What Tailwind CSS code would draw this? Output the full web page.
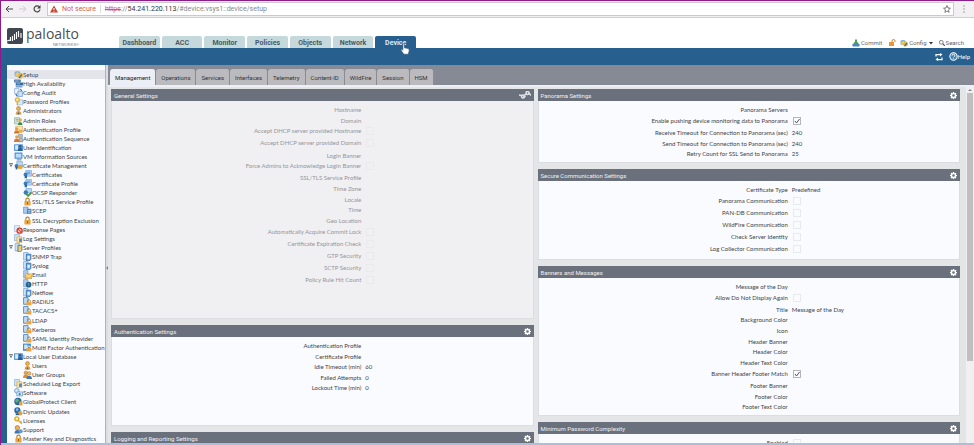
<!DOCTYPE html>
<html lang="en">
<head>
<meta charset="utf-8">
<title>Device setup</title>
<script src="https://cdn.jsdelivr.net/npm/@tailwindcss/browser@4"></script>
</head>
<body class="flex h-screen flex-col overflow-hidden border-t border-l border-[#8e1a8e] bg-white font-[Lato,sans-serif] text-[6px] leading-[9px] text-[#444]">

<svg class="hidden">
  <symbol id="gear" viewBox="0 0 16 16"><path fill="currentColor" fill-rule="evenodd" d="M6.600 0h2.800l.4 2.200 1.300.6L13 1.500 14.800 3.400 13.400 5.200l.6 1.400 2 .3v2.500l-2.100.5-.5 1.300 1.300 1.800-1.900 1.900-1.800-1.300-1.300.5L9.400 16H6.600l-.4-2-1.300-.5L3 14.900 1.100 13l1.300-1.800-.5-1.300L0 9.400V6.800l2-.4.5-1.300L1.200 3.300 3.100 1.400l1.800 1.300 1.300-.5zM8 5a3 3 0 1 0 0 6 3 3 0 0 0 0-6z"/></symbol>
  <symbol id="setup" viewBox="0 0 16 16"><rect x="1" y="2" width="10" height="10" rx="3" fill="#7fb0dc"/><path d="M2 9l4-6 3 3-3 6z" fill="#f3cf5c"/><circle cx="11" cy="10" r="5" fill="#f0b83f"/><path d="M9 14l5-6" stroke="#3d6fa8" stroke-width="2.500"/></symbol>
  <symbol id="ha" viewBox="0 0 16 16"><rect y="1" width="12" height="5" rx="1" fill="#4f7fb4"/><rect x="3" y="6" width="13" height="5" rx="1" fill="#356a9f"/><rect x="3" y="11" width="12" height="4" rx="1" fill="#7ba4cd"/><path d="M2 3.500h6M5 8.500h6" stroke="#cfe2f4"/></symbol>
  <symbol id="audit" viewBox="0 0 16 16"><path d="M1 1h8v9H1z" fill="#e7f1fb" stroke="#6b9bce"/><path d="M7 6h8v9H7z" fill="#cfe2f6" stroke="#4c83bd"/><path d="M3 11l3 4M11 2l3 3" stroke="#2f6fb0" stroke-width="2"/></symbol>
  <symbol id="key" viewBox="0 0 16 16"><circle cx="5" cy="5" r="3.500" fill="#fff3b8" stroke="#dca82c" stroke-width="2.500"/><path d="M8 8l6 6M11 11l3-1" stroke="#dca82c" stroke-width="2.500"/></symbol>
  <symbol id="pass" viewBox="0 0 16 16"><path d="M6 5h9v9H6z" fill="#dce9f7" stroke="#86add6"/><circle cx="6" cy="5" r="3.500" fill="#fff3b8" stroke="#e5b335" stroke-width="2.500"/><path d="M6 9v6" stroke="#e5b335" stroke-width="2.500"/></symbol>
  <symbol id="user" viewBox="0 0 16 16"><circle cx="8" cy="4.500" r="3.500" fill="#eeb153" stroke="#a86e22"/><path d="M3 15c0-4 2-6 5-6s5 2 5 6z" fill="#e59a2e"/><path d="M8 10l2 5H6z" fill="#3e74b5"/></symbol>
  <symbol id="roles" viewBox="0 0 16 16"><path d="M1 3h9v11H1z" fill="#dcebd9" stroke="#6c9c79"/><path d="M3 6h5M3 9h5" stroke="#507bb0"/><circle cx="11" cy="7" r="3" fill="#e8a848"/><path d="M7 16c0-4 2-5 4-5s4 1 4 5z" fill="#3d8a58"/></symbol>
  <symbol id="users" viewBox="0 0 16 16"><circle cx="5" cy="5" r="3" fill="#eeb153" stroke="#9a6220"/><path d="M0 14c0-4 2-6 5-6s5 2 5 6z" fill="#e38d29"/><circle cx="11" cy="6" r="3" fill="#f2c678" stroke="#9a6220"/><path d="M6 16c0-4 2-6 5-6s5 2 5 6z" fill="#4177b4"/></symbol>
  <symbol id="authp" viewBox="0 0 16 16"><path d="M3 2h12v9H3z" fill="#fce7c2" stroke="#dd9a3c"/><circle cx="5" cy="7" r="3" fill="#e8a03c"/><path d="M0 15c0-4 2-5 5-5s5 1 5 5z" fill="#d9772b"/><rect x="9" y="8" width="6" height="6" fill="#f1b13c"/></symbol>
  <symbol id="authq" viewBox="0 0 16 16"><path d="M8 1h7v5H8zM9 8h7v6H9z" fill="#b9bec8" stroke="#7c8290"/><circle cx="5" cy="5" r="3" fill="#e8a03c"/><path d="M0 14c0-4 2-6 5-6s5 2 5 6z" fill="#d9772b"/></symbol>
  <symbol id="ident" viewBox="0 0 16 16"><rect y="2" width="16" height="12" rx="1" fill="#5d98d4"/><path d="M2 4h5v8H2z" fill="#dceafa"/><circle cx="11" cy="6" r="2.500" fill="#2c5d96"/><path d="M7 14c0-4 2-5 4-5s4 1 4 5z" fill="#2c5d96"/></symbol>
  <symbol id="vm" viewBox="0 0 16 16"><rect x="1" y="1" width="14" height="11" rx="1" fill="#4b90d6"/><path d="M3 3h10v7H3z" fill="#b9dcfa"/><path d="M5 14h8" stroke="#6789ae" stroke-width="2"/></symbol>
  <symbol id="cert" viewBox="0 0 16 16"><path d="M5 1h10v10H5z" fill="#b8d7f4" stroke="#5e97d0"/><path d="M7 4h6M7 6.500h6" stroke="#3b78b8"/><circle cx="4.500" cy="8" r="3.500" fill="#397cbc"/><path d="M3 10h4v5l-2-1-2 1z" fill="#28629c"/></symbol>
  <symbol id="certm" viewBox="0 0 16 16"><path d="M5 1h10v10H5z" fill="#b8d7f4" stroke="#5e97d0"/><circle cx="4.500" cy="9" r="3.500" fill="#397cbc"/><path d="M7 7h8v7H7z" fill="#e6a53b"/><path d="M3 10h3v5H3z" fill="#28629c"/></symbol>
  <symbol id="ocsp" viewBox="0 0 16 16"><path d="M5 1h10v8H5z" fill="#b8d7f4" stroke="#5e97d0"/><circle cx="5" cy="8" r="4" fill="#397cbc"/><path d="M6 11l3 3 6-6" fill="none" stroke="#3d9348" stroke-width="3"/></symbol>
  <symbol id="lock" viewBox="0 0 16 16"><path d="M5 8V5a3 3 0 0 1 6 0v3" fill="none" stroke="#b88132" stroke-width="2"/><rect x="2.500" y="7" width="11" height="8" rx="1" fill="#e9a640"/><path d="M8 9v4" stroke="#8f5a16" stroke-width="1.500"/></symbol>
  <symbol id="scep" viewBox="0 0 16 16"><path d="M1 2h8v11H1z" fill="#a9cdf0" stroke="#3e7dbd"/><path d="M7 5h8v9H7z" fill="#4c87c4"/><path d="M9 8h4M9 11h4" stroke="#fff"/></symbol>
  <symbol id="resp" viewBox="0 0 16 16"><path d="M1 1h9v11H1z" fill="#e1ecf7" stroke="#8db0d4"/><circle cx="10" cy="10" r="4.500" fill="#fbd8d2" stroke="#d6402e" stroke-width="2.500"/><path d="M7 7l6 6" stroke="#d6402e" stroke-width="2"/></symbol>
  <symbol id="log" viewBox="0 0 16 16"><path d="M1 1h9v11H1z" fill="#d5e6f7" stroke="#6a9dcf"/><path d="M5 5h9v10H5z" fill="#fbe3a2" stroke="#caa03a"/><path d="M9 8h5v6H9z" fill="#4f8ac8"/></symbol>
  <symbol id="server" viewBox="0 0 16 16"><path d="M1 1h8v13H1z" fill="#cfe3f7" stroke="#5990c9"/><path d="M6 4h8v9l-3 3H6z" fill="#7eb2e4" stroke="#2e6eb0" stroke-width="1.500"/><path d="M8 7h4v5H8z" fill="#eaf4fd"/></symbol>
  <symbol id="serverg" viewBox="0 0 16 16"><path d="M2 1h8v13H2z" fill="#cfe3f7" stroke="#5990c9"/><path d="M7 4h7v9l-3 3H7z" fill="#f3cf62" stroke="#2e6eb0" stroke-width="1.500"/></symbol>
  <symbol id="mail" viewBox="0 0 16 16"><path d="M1 1h8v13H1z" fill="#a9cdf0" stroke="#5990c9"/><path d="M4 7h12v8H4z" fill="#f5c453" stroke="#bd8826"/><path d="M4 7l6 5 6-5" fill="none" stroke="#fff"/></symbol>
  <symbol id="http" viewBox="0 0 16 16"><path d="M1 1h8v13H1z" fill="#a9cdf0" stroke="#5990c9"/><circle cx="10" cy="10" r="5" fill="#23609d"/><path d="M8 7l4 1-2 5z" fill="#58a663"/></symbol>
  <symbol id="slock" viewBox="0 0 16 16"><path d="M1 1h8v12H1z" fill="#bddaf5" stroke="#4a83bf" stroke-width="1.500"/><path d="M8 10V7.500a2.500 2.500 0 0 1 5 0V10" fill="none" stroke="#a9762c" stroke-width="1.500"/><rect x="6" y="9" width="9" height="6" fill="#e9a640"/></symbol>
  <symbol id="mfa" viewBox="0 0 16 16"><path d="M0 1h14v13H0z" fill="#3f8ed6"/><path d="M2 3h6v8H2z" fill="#cbe4fa"/><path d="M8 10V8a2.500 2.500 0 0 1 5 0v2" fill="none" stroke="#fff" stroke-width="1.500"/><rect x="6" y="9" width="9" height="6" fill="#e9a640"/></symbol>
  <symbol id="globe" viewBox="0 0 16 16"><circle cx="7" cy="8" r="6.500" fill="#2a67a6"/><path d="M3 4l4-1 2 3-4 4-3-2z" fill="#62b067"/><path d="M9 8h6v7H9z" fill="#e4a138"/></symbol>
  <symbol id="dyn" viewBox="0 0 16 16"><circle cx="6" cy="6" r="5.500" fill="#2a67a6"/><path d="M3 3l4-1 1 3-3 3z" fill="#8fc6ef"/><circle cx="11" cy="11" r="4" fill="#e4a138"/><path d="M3 13h6" stroke="#2b5e92" stroke-width="3"/></symbol>
  <symbol id="soft" viewBox="0 0 16 16"><circle cx="5" cy="5" r="4" fill="#d5e7f8" stroke="#5d96cf" stroke-width="1.500"/><path d="M5 7h10v7H5z" fill="#e4eef8" stroke="#6f9fce" stroke-width="1.500"/><circle cx="10" cy="11" r="2" fill="#3e7cba"/></symbol>
  <symbol id="support" viewBox="0 0 16 16"><circle cx="6" cy="5" r="4" fill="#eeb153" stroke="#9a6220"/><path d="M1 15c0-4 2-6 5-6s5 2 5 6z" fill="#3e74b5"/><circle cx="12" cy="11" r="3.500" fill="#5c9ad8"/></symbol>
</svg>

<!-- Browser toolbar -->
<div class="flex h-[17px] shrink-0 items-center border-b border-[#d0ccd2] bg-[#f2f0f3]">
  <button aria-label="Back" class="ml-1 w-2"><svg viewBox="0 0 8 8" class="size-2"><path d="M4 1L1 4l3 3M1 4h7" fill="none" stroke="#444"/></svg></button>
  <button aria-label="Forward" class="ml-1.5 w-2"><svg viewBox="0 0 8 8" class="size-2"><path d="M4 1l3 3-3 3M0 4h7" fill="none" stroke="#ccc"/></svg></button>
  <button aria-label="Reload" class="ml-1.5 w-2"><svg viewBox="0 0 8 8" class="size-2"><path d="M6.600 2.300A3 3 0 1 0 7 4.500" fill="none" stroke="#444" stroke-width="1.200"/><path d="M7.500 0v3.500H4z" fill="#444"/></svg></button>
  <div class="ml-1.5 flex h-3.5 grow items-center border border-[#ccc8ce] bg-white pl-0.5 font-[Roboto,sans-serif] text-[7px]">
    <svg viewBox="0 0 8 8" class="mr-1 size-2"><path d="M4 .5L8 7.500H0z" fill="#c8432f"/><path d="M4 3v2M4 5.700v1" stroke="#fff"/></svg>
    <span class="text-[#d0604f]">Not secure</span>
    <span class="mx-1 h-2 w-px bg-[#ddd]"></span>
    <a href="#setup" class="text-[#888]"><span class="text-[#d0604f] line-through">https</span>://<span class="text-[#333]">54.241.220.113</span>/#device:vsys1::device/setup</a>
    <svg viewBox="0 0 16 16" class="mr-0.5 ml-auto size-2"><path d="M8 1l2 5 5 .4-4 3.400 1.300 5L8 12l-4.300 2.800L5 9.800 1 6.400 6 6z" fill="none" stroke="#555" stroke-width="1.500"/></svg>
  </div>
  <button aria-label="Menu" class="mx-1 flex w-3 justify-center"><svg viewBox="0 0 4 8" class="h-2 w-1"><path d="M1.500 1h1M1.500 4h1M1.500 7h1" stroke="#555"/></svg></button>
</div>

<!-- Brand and main navigation -->
<header class="flex h-[30px] shrink-0 items-end">
  <div class="flex w-[118px] items-start gap-[3px] pb-px pl-1.5">
    <svg viewBox="0 0 16 16" class="mt-0.5 size-4"><rect width="16" height="16" rx="2" fill="#414750"/><path d="M0 13l3-1M3.500 9v4M5.500 8v5M7.500 6v6M9.500 4v7M11.500 3v6M14 5v5" stroke="#fff" stroke-width="1.100"/></svg>
    <div class="flex flex-col items-end">
      <span class="font-['Open_Sans',sans-serif] text-[14px] leading-4 text-[#4a4f57]">paloalto</span>
      <span class="font-['Liberation_Sans',sans-serif] text-[4px] leading-[5px] text-[#777]">NETWORKS®</span>
    </div>
  </div>
  <nav id="main-tabs" class="flex h-3 w-[297px] gap-0.5 font-[Roboto,sans-serif] text-[7px] font-bold"></nav>
  <div class="mr-2.5 mb-px ml-auto flex items-center font-[Roboto,sans-serif] text-[#666]">
    <button class="flex items-center gap-px"><svg viewBox="0 0 16 16" class="size-2"><path d="M1 11l3-3h8l3 3v4H1z" fill="#4d86bd"/><path d="M8 11L3.500 6H6V1h4v5h2.500z" fill="#50a053"/></svg>Commit</button>
    <button aria-label="Locks" class="ml-1.5"><svg viewBox="0 0 16 16" class="size-2"><path d="M8 7V4a3 3 0 0 1 6 0v2" fill="none" stroke="#c08434" stroke-width="2"/><rect x="2" y="6" width="10" height="8" fill="#e9963a"/></svg></button>
    <button class="ml-1 flex items-center gap-px"><svg viewBox="0 0 16 16" class="size-2"><use href="#setup"/></svg>Config<svg viewBox="0 0 8 8" class="ml-px size-1"><path d="M0 2h8L4 7z" fill="#333"/></svg></button>
    <button class="ml-1.5 flex items-center gap-px"><svg viewBox="0 0 8 8" class="size-1.5"><circle cx="3" cy="3" r="2.500" fill="none" stroke="#555"/><path d="M5 5l3 3" stroke="#555" stroke-width="1.500"/></svg>Search</button>
  </div>
</header>

<div class="flex h-[17px] shrink-0 items-center justify-end gap-1.5 bg-[#27608f] pr-1 text-white">
  <button aria-label="Refresh"><svg viewBox="0 0 16 16" class="size-2"><path d="M2 7V3h9M14 9v4H5" fill="none" stroke="#fff" stroke-width="2.500"/><path d="M10 0l5 3-5 4zM6 9v7l-5-3z" fill="#fff"/></svg></button>
  <button class="flex items-center"><svg viewBox="0 0 16 16" class="size-[9px]"><circle cx="8" cy="8" r="6.500" fill="#3f83bb" stroke="#fff" stroke-width="1.800"/><path d="M5.500 6.500a2.500 2.500 0 1 1 3.500 2L8 9.500M8 11v1.500" fill="none" stroke="#fff" stroke-width="1.500"/></svg>Help</button>
</div>

<div class="flex min-h-0 grow border-b-2 border-[#adbfd8] bg-[#27608f] pl-1.5">
  <aside class="w-[98px] shrink-0 overflow-hidden bg-[#fafbfe] pt-[5px]">
    <nav id="tree" class="flex h-full flex-col whitespace-nowrap"></nav>
  </aside>
  <div class="flex w-[3px] shrink-0 items-center justify-center border-l border-[#b0b3bb] bg-[#dcdde1] pt-7"><svg viewBox="0 0 4 8" class="h-1 w-0.5"><path d="M4 0v8L0 4z" fill="#888"/></svg></div>

  <main class="flex min-w-0 grow flex-col bg-[#e4e5e7]">
    <nav id="sub-tabs" class="flex h-5 shrink-0 items-end bg-[#868a94] pl-0.5 font-[Roboto,sans-serif]"></nav>
    <div class="flex min-h-0 grow border-t-2 border-[#eceff5]">
      <div class="grid min-w-0 grow grid-cols-2 gap-1 overflow-hidden pt-0.5 pl-[3px]">
        <div id="col-left" class="flex flex-col gap-1.5"></div>
        <div id="col-right" class="flex flex-col gap-1.5"></div>
      </div>
      <div class="ml-1.5 flex w-2 shrink-0 flex-col items-center bg-[#f0f0f2]">
        <svg viewBox="0 0 8 8" class="my-px size-1"><path d="M4 2l4 4H0z" fill="#888"/></svg>
        <div class="h-[268px] w-1.5 bg-[#bfbfc1]"></div>
      </div>
    </div>
  </main>
</div>

<!-- Pointer over the Device tab -->
<svg viewBox="0 0 16 20" class="absolute top-[43px] left-[400px] h-3 w-2.5"><path d="M5 1.500c1.500-.5 2 .5 2 1.500v5l6 1.200c1.500.3 2 1 2 2.500 0 3-1 4-1.500 7H6L1.500 12c0-2 1.500-2 3 0V3c0-1 0-1.300.5-1.500z" fill="#fff" stroke="#37506a"/></svg>

<script>
const icon = (id, cls) => `<svg viewBox="0 0 16 16" class="${cls}"><use href="#${id}"/></svg>`;

document.getElementById('main-tabs').innerHTML =
  ['Dashboard', 'ACC', 'Monitor', 'Policies', 'Objects', 'Network', 'Device'].map(t =>
    `<a href="#${t}" class="flex flex-1 items-center justify-center rounded-t-[2px] pt-0.5 ${t === 'Device' ? 'bg-[#27608f] text-[#d8ecfa]' : 'bg-[#c5d9dd] text-[#4a5a66]'}">${t}</a>`).join('');

document.getElementById('sub-tabs').innerHTML =
  ['Management', 'Operations', 'Services', 'Interfaces', 'Telemetry', 'Content-ID', 'WildFire', 'Session', 'HSM'].map((t, i) =>
    `<a href="#${t}" class="flex h-4 items-center rounded-t-[3px] border-r border-[#8b8c92] px-[5px] ${i ? 'bg-[#bbbbbf] text-[#333]' : 'bg-[#eceff5] text-[#222]'}">${t}</a>`).join('');

const tree = [
  [0, 'setup', 'Setup'], [0, 'ha', 'High Availability'], [0, 'audit', 'Config Audit'], [0, 'pass', 'Password Profiles'],
  [0, 'user', 'Administrators'], [0, 'roles', 'Admin Roles'], [0, 'authp', 'Authentication Profile'], [0, 'authq', 'Authentication Sequence'],
  [0, 'ident', 'User Identification'], [0, 'vm', 'VM Information Sources'], [1, 'certm', 'Certificate Management'],
  [2, 'cert', 'Certificates'], [2, 'cert', 'Certificate Profile'], [2, 'ocsp', 'OCSP Responder'], [2, 'lock', 'SSL/TLS Service Profile'],
  [2, 'scep', 'SCEP'], [2, 'lock', 'SSL Decryption Exclusion'], [0, 'resp', 'Response Pages'], [0, 'log', 'Log Settings'],
  [1, 'serverg', 'Server Profiles'], [2, 'server', 'SNMP Trap'], [2, 'server', 'Syslog'], [2, 'mail', 'Email'], [2, 'http', 'HTTP'],
  [2, 'server', 'Netflow'], [2, 'slock', 'RADIUS'], [2, 'slock', 'TACACS+'], [2, 'slock', 'LDAP'], [2, 'slock', 'Kerberos'],
  [2, 'slock', 'SAML Identity Provider'], [2, 'mfa', 'Multi Factor Authentication'], [1, 'ident', 'Local User Database'],
  [2, 'user', 'Users'], [2, 'users', 'User Groups'], [0, 'log', 'Scheduled Log Export'], [0, 'soft', 'Software'],
  [0, 'globe', 'GlobalProtect Client'], [0, 'dyn', 'Dynamic Updates'], [0, 'key', 'Licenses'], [0, 'support', 'Support'],
  [0, 'lock', 'Master Key and Diagnostics']
];
document.getElementById('tree').innerHTML = tree.map(([kind, ic, t], i) => `
  <a href="#${ic}" class="flex min-h-0 flex-1 items-center ${i ? '' : 'bg-[#e3e5ea]'} ${kind === 2 ? 'pl-4' : kind === 1 ? 'pl-0.5' : 'pl-[7px]'}">
    ${kind === 1 ? '<svg viewBox="0 0 8 8" class="mr-px size-1"><path d="M1 1h6L4 7z" fill="#fff" stroke="#555" stroke-width="1.500"/></svg>' : ''}
    ${icon(ic, 'size-[9px] shrink-0')}<span>${t}</span></a>`).join('');

/* Row: [label, value]; a boolean value is a read-only tick box. */
const panel = (title, height, rowsHeight, rows, disabled) => `
  <section class="flex shrink-0 flex-col ${height}">
    <h2 class="flex h-3 shrink-0 items-center justify-between bg-[#6a717d] px-[3px] font-[Roboto,sans-serif] text-[#eef0f4]">${title}
      <button aria-label="Edit ${title}">${disabled
        ? '<svg viewBox="0 0 24 16" class="h-2 w-3"><path d="M0 8l5 1M8 13l5-3M11 8l4-2M20 4l4 5" fill="none" stroke="#e0e2e8" stroke-width="3"/><circle cx="8" cy="11" r="3" fill="none" stroke="#e0e2e8" stroke-width="3"/><circle cx="17" cy="4" r="3" fill="none" stroke="#e0e2e8" stroke-width="3"/></svg>'
        : icon('gear', 'size-[7px] text-white')}</button></h2>
    <div class="grow border border-t-0 border-[#dcdde1] pt-1 ${disabled ? 'bg-[#f0eff1] text-[#96959b]' : 'bg-[#fafbfe] text-[#444]'}">
      <div class="flex flex-col ${rowsHeight}">${rows.map(([l, v], i) => {
        const id = (title + i).replace(/ /g, '-');
        const box = typeof v === 'boolean';
        return `<div class="grid min-h-0 grid-cols-[3fr_2fr] items-start ${box ? 'flex-9' : 'flex-8'}">
          <label for="${id}" class="pr-[3px] text-right">${l}</label>
          ${box
            ? `<span class="relative mt-px ml-0.5 size-2"><input id="${id}" type="checkbox" ${v ? 'checked' : ''} disabled class="block size-2 appearance-none border ${disabled ? 'border-[#eae9ec]' : v ? 'border-[#b5b6bb]' : 'border-[#e9eaee]'}">${v
              ? '<svg viewBox="0 0 8 8" class="absolute inset-0 size-2"><path d="M2 4l1.500 2L6.500 2" fill="none" stroke="#555"/></svg>' : ''}</span>`
            : `<output id="${id}" class="pl-px">${v || ''}</output>`}
        </div>`; }).join('')}</div>
    </div>
  </section>`;

document.getElementById('col-left').innerHTML =
  panel('General Settings', 'h-[230px]', 'h-[182px]', [
    ['Hostname'], ['Domain'], ['Accept DHCP server provided Hostname', false], ['Accept DHCP server provided Domain', false],
    ['Login Banner'], ['Force Admins to Acknowledge Login Banner', false], ['SSL/TLS Service Profile'], ['Time Zone'], ['Locale'],
    ['Time'], ['Geo Location'], ['Automatically Acquire Commit Lock', false], ['Certificate Expiration Check', false],
    ['GTP Security', false], ['SCTP Security', false], ['Policy Rule Hit Count', false]], true) +
  panel('Authentication Settings', 'h-[101px]', 'h-[53px]', [
    ['Authentication Profile'], ['Certificate Profile'], ['Idle Timeout (min)', '60'], ['Failed Attempts', '0'], ['Lockout Time (min)', '0']]) +
  panel('Logging and Reporting Settings', 'h-[60px]', 'h-4', []);

document.getElementById('col-right').innerHTML =
  panel('Panorama Settings', 'h-[74px]', 'h-[55px]', [
    ['Panorama Servers'], ['Enable pushing device monitoring data to Panorama', true],
    ['Receive Timeout for Connection to Panorama (sec)', '240'], ['Send Timeout for Connection to Panorama (sec)', '240'],
    ['Retry Count for SSL Send to Panorama', '25']]) +
  panel('Secure Communication Settings', 'h-[91px]', 'h-[71px]', [
    ['Certificate Type', 'Predefined'], ['Panorama Communication', false], ['PAN-DB Communication', false],
    ['WildFire Communication', false], ['Check Server Identity', false], ['Log Collector Communication', false]]) +
  panel('Banners and Messages', 'h-[150px]', 'h-[131px]', [
    ['Message of the Day'], ['Allow Do Not Display Again', false], ['Title', 'Message of the Day'], ['Background Color'], ['Icon'],
    ['Header Banner'], ['Header Color'], ['Header Text Color'], ['Banner Header Footer Match', true],
    ['Footer Banner'], ['Footer Color'], ['Footer Text Color']]) +
  panel('Minimum Password Complexity', 'h-[60px]', 'h-3', [['Enabled', false]]);
</script>
</body>
</html>
